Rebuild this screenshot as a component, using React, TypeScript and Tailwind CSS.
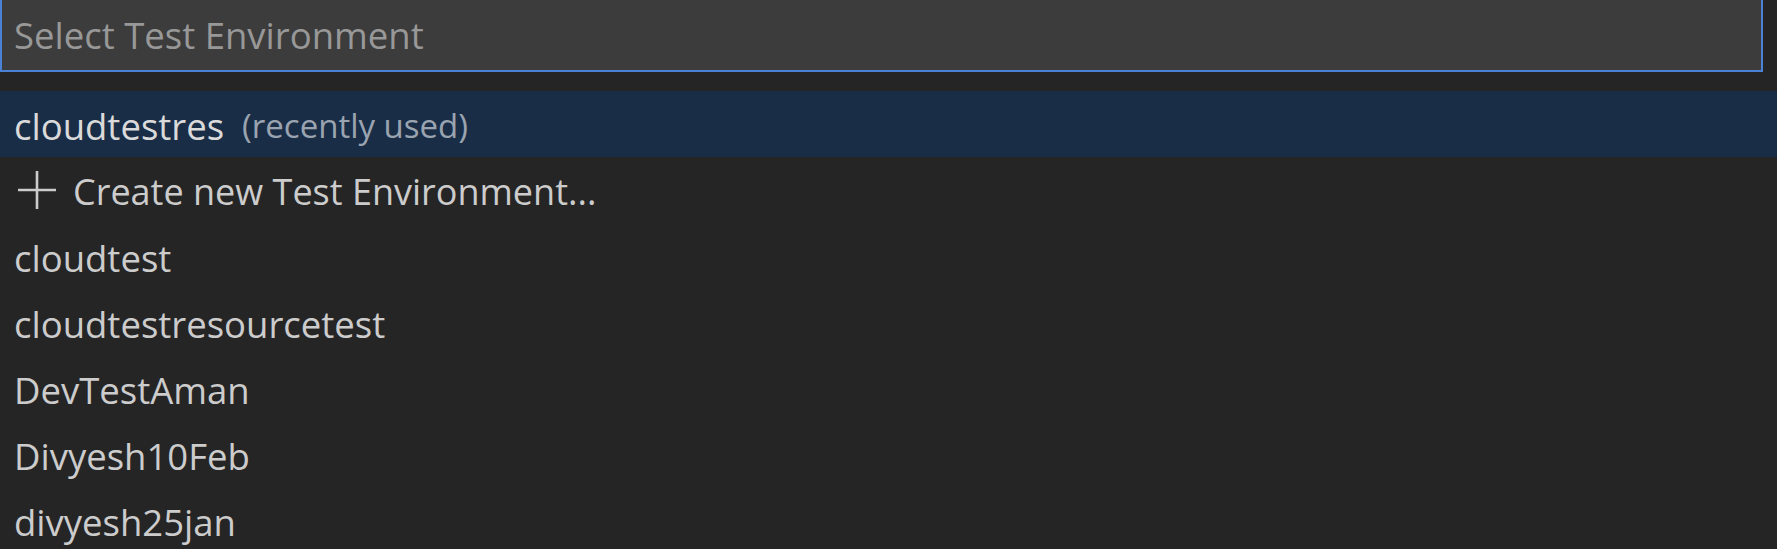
const items = [
  "cloudtest",
  "cloudtestresourcetest",
  "DevTestAman",
  "Divyesh10Feb",
  "divyesh25jan",
];

function AddIcon() {
  return (
    <svg viewBox="0 0 40 40" className="ml-[3px] mr-[16px] h-[40px] w-[40px] shrink-0" fill="none">
      <path d="M20 1v38M1 20h38" stroke="currentColor" strokeWidth="2.6" />
    </svg>
  );
}

export default function App() {
  return (
    <div
      className="h-[549px] w-full overflow-hidden bg-[#252526] text-[36.5px] text-[#cccccc]"
      style={{ fontFamily: '"Open Sans", "Noto Sans", sans-serif' }}
    >
      <div className="mr-[14px] flex h-[72px] items-center border-2 border-t-0 border-[#4b82d6] bg-[#3c3c3c] pl-[12px]">
        <span className="text-[#989898]">Select Test Environment</span>
      </div>

      <ul className="mt-[19px]">
        <li className="flex h-[66px] items-center bg-[#1a2d47] pl-[14px] pt-[4px] text-[#dadada]">
          <span>cloudtestres</span>
          <span className="ml-[18px] text-[33px] text-[#9aa4b0]">(recently used)</span>
        </li>
        <li className="flex h-[66px] items-center pl-[14px]">
          <AddIcon />
          <span className="pt-[4px] text-[36px]">Create new Test Environment...</span>
        </li>
        {items.map((name) => (
          <li key={name} className="flex h-[66px] items-center pl-[14px] pt-[4px]">
            {name}
          </li>
        ))}
      </ul>
    </div>
  );
}
